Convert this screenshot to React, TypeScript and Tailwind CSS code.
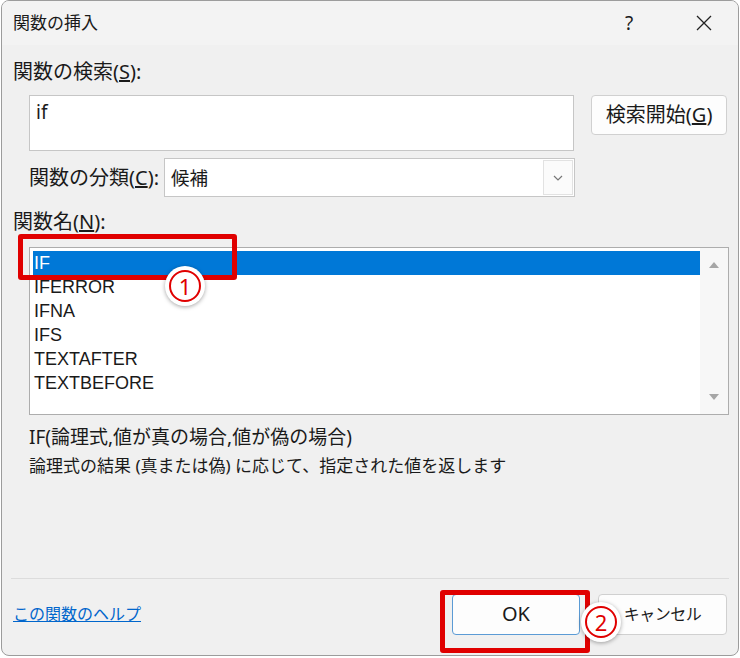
import React from "react";

const FONT = { fontFamily: '"Noto Sans", "Noto Sans CJK JP", sans-serif' };
const LIST_FONT = { fontFamily: '"Liberation Sans", "Noto Sans", sans-serif' };

const items = ["IF", "IFERROR", "IFNA", "IFS", "TEXTAFTER", "TEXTBEFORE"];

const Badge = ({ n }: { n: string }) => (
  <div className="w-[40px] h-[40px] rounded-full bg-white shadow-[0_1px_4px_rgba(0,0,0,0.35)] flex items-center justify-center">
    <div className="w-[32px] h-[32px] rounded-full border-[2.5px] border-[#e00000] flex items-center justify-center text-[#e00000] text-[22px] leading-none">
      {n}
    </div>
  </div>
);

export default function App() {
  return (
    <div className="w-[740px] h-[658px] bg-white relative text-[#1a1a1a]" style={FONT}>
      <div className="absolute inset-x-[1px] top-0 h-[656px] border border-[#9c9c9c] rounded-lg bg-[#f0f0f0] overflow-hidden flex flex-col">
        {/* title bar */}
        <div className="h-[44px] bg-[#f3f3f3] flex items-center pl-[11px] pr-[26px] shrink-0">
          <span className="text-[17px]">関数の挿入</span>
          <span className="ml-auto text-[19px] w-[20px] text-center">?</span>
          <svg className="ml-[57px]" width="16" height="16" viewBox="0 0 16 16">
            <path d="M1 1 L15 15 M15 1 L1 15" stroke="#222" strokeWidth="1.3" />
          </svg>
        </div>

        <div className="px-[11px] flex flex-col">
          <div className="text-[20px] leading-[26px] mt-[14px]">
            関数の検索(<span className="underline">S</span>):
          </div>

          <div className="flex mt-[10px] pl-[16px]">
            <div className="w-[546px] h-[56px] bg-white border border-[#c6c6c6] px-[6px] pt-[3px] text-[19px] leading-[26px]">
              if
            </div>
            <button className="ml-[17px] w-[136px] h-[40px] bg-[#fdfdfd] border border-[#d0d0d0] rounded-[4px] text-[20px]">
              検索開始(<span className="underline">G</span>)
            </button>
          </div>

          <div className="flex items-center mt-[7px] pl-[16px]">
            <span className="text-[20px] w-[135px] whitespace-nowrap">
              関数の分類(<span className="underline">C</span>):
            </span>
            <div className="w-[411px] h-[39px] bg-white border border-[#c6c6c6] flex items-center pl-[6px] pr-[1px] text-[18.5px]">
              <span>候補</span>
              <div className="ml-auto w-[30px] h-[35px] border border-[#e2e2e2] bg-[#fbfbfb] flex items-center justify-center">
                <svg width="10" height="6" viewBox="0 0 10 6">
                  <path d="M1 1 L5 5 L9 1" fill="none" stroke="#777" strokeWidth="1.2" />
                </svg>
              </div>
            </div>
          </div>

          <div className="text-[20px] leading-[26px] mt-[12px]">
            関数名(<span className="underline">N</span>):
          </div>

          <div className="ml-[16px] mt-[12px] w-[700px] h-[168px] bg-white border border-[#adadad] flex p-[3px] pr-0">
            <div className="flex-1 flex flex-col" style={LIST_FONT}>
              {items.map((it, i) => (
                <div
                  key={it}
                  className={`h-[24px] flex items-center pl-[1px] text-[18px] leading-[22px] ${
                    i === 0 ? "bg-[#0078d7] text-white" : ""
                  }`}
                >
                  {it}
                </div>
              ))}
            </div>
            <div className="w-[28px] -my-[3px] bg-[#f7f7f7] flex flex-col items-center justify-between py-[14px]">
              <svg width="10" height="6" viewBox="0 0 10 6">
                <path d="M0 6 L5 0 L10 6 Z" fill="#a6a6a6" />
              </svg>
              <svg width="10" height="6" viewBox="0 0 10 6">
                <path d="M0 0 L5 6 L10 0 Z" fill="#a6a6a6" />
              </svg>
            </div>
          </div>

          <div className="ml-[16px] mt-[9px] text-[19px] leading-[26px] whitespace-nowrap">
            IF(論理式,値が真の場合,値が偽の場合)
          </div>
          <div className="ml-[16px] mt-[3px] text-[17px] leading-[26px] whitespace-nowrap">
            論理式の結果 (真または偽) に応じて、指定された値を返します
          </div>
        </div>

        <div className="mt-auto border-t border-[#dcdcdc] mx-[9px]" />
        <div className="h-[76px] flex items-center px-[11px] shrink-0">
          <a className="text-[#0066cc] underline text-[16px] mb-[6px]">この関数のヘルプ</a>
          <button className="ml-auto w-[128px] h-[41px] bg-[#fdfdfd] border border-[#5b9bd5] rounded-[4px] text-[20px] mb-[6px]">
            OK
          </button>
          <button className="ml-[18px] w-[129px] h-[41px] bg-[#fdfdfd] border border-[#d0d0d0] rounded-[4px] text-[16px] tracking-[-0.5px] mb-[6px]">
            キャンセル
          </button>
        </div>
      </div>

      {/* annotations */}
      <div className="absolute left-[18px] top-[234px] w-[219px] h-[46px] border-[5px] border-[#e00000] rounded-[3px]" />
      <div className="absolute left-[440px] top-[590px] w-[150px] h-[63px] border-[5px] border-[#e00000] rounded-[3px]" />
      <div className="absolute left-[165px] top-[266px]">
        <Badge n="1" />
      </div>
      <div className="absolute left-[581px] top-[602px]">
        <Badge n="2" />
      </div>
    </div>
  );
}
